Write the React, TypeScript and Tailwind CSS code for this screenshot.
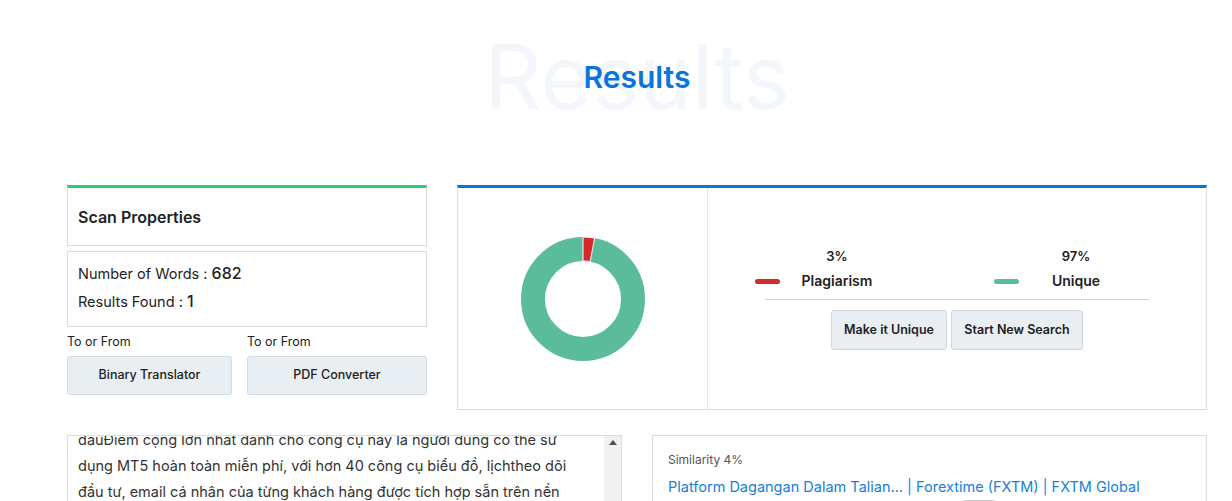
import React from 'react'

const font = { fontFamily: 'Inter, "Noto Sans", sans-serif' }

function Donut() {
  // 3% plagiarism slice starting at 12 o'clock
  const a = (3 / 100) * Math.PI * 2
  const ox = 62 * Math.sin(a)
  const oy = -62 * Math.cos(a)
  const ix = 38 * Math.sin(a)
  const iy = -38 * Math.cos(a)
  return (
    <svg width="130" height="130" viewBox="-65 -65 130 130">
      <circle cx="0" cy="0" r="50" fill="none" stroke="#5bbc9c" strokeWidth="24" />
      <path
        d={`M0 -62 A62 62 0 0 1 ${ox} ${oy} L${ix} ${iy} A38 38 0 0 0 0 -38 Z`}
        fill="#d9272e"
        stroke="#ffffff"
        strokeWidth="1"
      />
    </svg>
  )
}

function Legend({ pct, label, color }: { pct: string; label: string; color: string }) {
  return (
    <div className="flex items-end">
      <div className={`w-[25px] h-[5px] rounded-full mb-[7px] ${color}`} />
      <div className="w-[114px] flex flex-col items-center">
        <div className="text-[13px] font-semibold text-[#222] leading-[18px]">{pct}</div>
        <div className="text-[14px] font-semibold text-[#222] leading-[20px] mt-[6px]">{label}</div>
      </div>
    </div>
  )
}

export default function App() {
  return (
    <div className="bg-white w-[1232px] h-[501px] overflow-hidden" style={font}>
      <div className="ml-[67px] w-[1140px] relative h-[185px] flex justify-center">
        <div className="absolute top-[20px] left-0 right-0 text-center text-[89px] leading-[114px] text-[#f3f7fb] select-none">
          Results
        </div>
        <h1 className="relative mt-[56px] text-[30px] leading-[42px] font-semibold text-[#0b74de]">Results</h1>
      </div>

      <div className="pl-[67px] flex gap-[30px]">
        <div className="w-[360px]">
          <div className="h-[61px] border border-[#dcdcdc] border-t-[3px] border-t-[#2ecc71] px-[10px] flex items-center">
            <span className="text-[16px] font-semibold text-[#222]">Scan Properties</span>
          </div>
          <div className="mt-[5px] h-[76px] border border-[#dcdcdc] px-[10px] pt-[9px]">
            <div className="text-[14.5px] text-[#222] leading-[24px]">
              Number of Words : <span className="text-[16px] font-medium">682</span>
            </div>
            <div className="text-[14.5px] text-[#222] leading-[24px] mt-[3px]">
              Results Found : <span className="text-[16px] font-medium">1</span>
            </div>
          </div>
          <div className="mt-[6px] grid grid-cols-[165px_180px] gap-[15px]">
            {['Binary Translator', 'PDF Converter'].map(t => (
              <div key={t}>
                <div className="text-[12.5px] text-[#222] leading-[18px]">To or From</div>
                <div className="mt-[5px] h-[39px] bg-[#e9eef3] border border-[#d3dbe4] rounded-[3px] flex items-center justify-center text-[12.5px] font-medium text-[#222]">
                  {t}
                </div>
              </div>
            ))}
          </div>
        </div>

        <div className="w-[750px] h-[225px] border border-[#dcdcdc] border-t-[3px] border-t-[#0b74de] flex">
          <div className="w-[250px] border-r border-[#e1e3e8] flex items-center justify-center">
            <Donut />
          </div>
          <div className="flex-1 flex flex-col justify-center">
            <div className="flex pl-[47px] gap-[100px]">
              <Legend pct="3%" label="Plagiarism" color="bg-[#d9272e]" />
              <Legend pct="97%" label="Unique" color="bg-[#5bbc9c]" />
            </div>
            <div className="mx-[57px] mt-[8px] border-t border-[#c9d3e0]" />
            <div className="mt-[10px] flex justify-center gap-[4px]">
              <div className="w-[116px] h-[40px] bg-[#e9eef3] border border-[#cdd6e0] rounded-[3px] flex items-center justify-center text-[12.5px] font-semibold text-[#222]">
                Make it Unique
              </div>
              <div className="w-[132px] h-[40px] bg-[#e9eef3] border border-[#cdd6e0] rounded-[3px] flex items-center justify-center text-[12.5px] font-semibold text-[#222]">
                Start New Search
              </div>
            </div>
          </div>
        </div>
      </div>

      <div className="pl-[67px] mt-[25px] flex gap-[30px]">
        <div className="w-[555px] h-[200px] border border-[#dcdcdc] flex overflow-hidden">
          <div className="flex-1 pl-[10px] pr-[30px] overflow-hidden">
            <div className="-mt-[9px] text-[14.5px] leading-[26px] text-[#333]">
              đầuĐiểm cộng lớn nhất dành cho công cụ này là người dùng có thể sử dụng MT5 hoàn toàn miễn phí, với hơn 40 công cụ biểu đồ, lịchtheo dõi đầu tư, email cá nhân của từng khách hàng được tích hợp sẵn trên nền tảng giao dịch.
            </div>
          </div>
          <div className="w-[17px] bg-[#f1f1f1] flex justify-center pt-[4px]">
            <svg width="8" height="5" viewBox="0 0 8 5">
              <path d="M4 0 L8 5 L0 5 Z" fill="#505050" />
            </svg>
          </div>
        </div>
        <div className="w-[555px] h-[200px] border border-[#dcdcdc] px-[15px] pt-[15px]">
          <div className="text-[12px] text-[#555] leading-[18px]">Similarity 4%</div>
          <div className="mt-[8px] text-[14.5px] text-[#1a7fd6] leading-[20px]">
            Platform Dagangan Dalam Talian... | Forextime (FXTM) | FXTM Global
          </div>
          <div className="ml-[293px] mt-[3px] w-[36px] h-[20px] border border-[#cfcfcf] rounded-[4px] flex justify-center">
            <div className="w-[6px] h-[2px] bg-[#333] mt-[2px]" />
          </div>
        </div>
      </div>
    </div>
  )
}
